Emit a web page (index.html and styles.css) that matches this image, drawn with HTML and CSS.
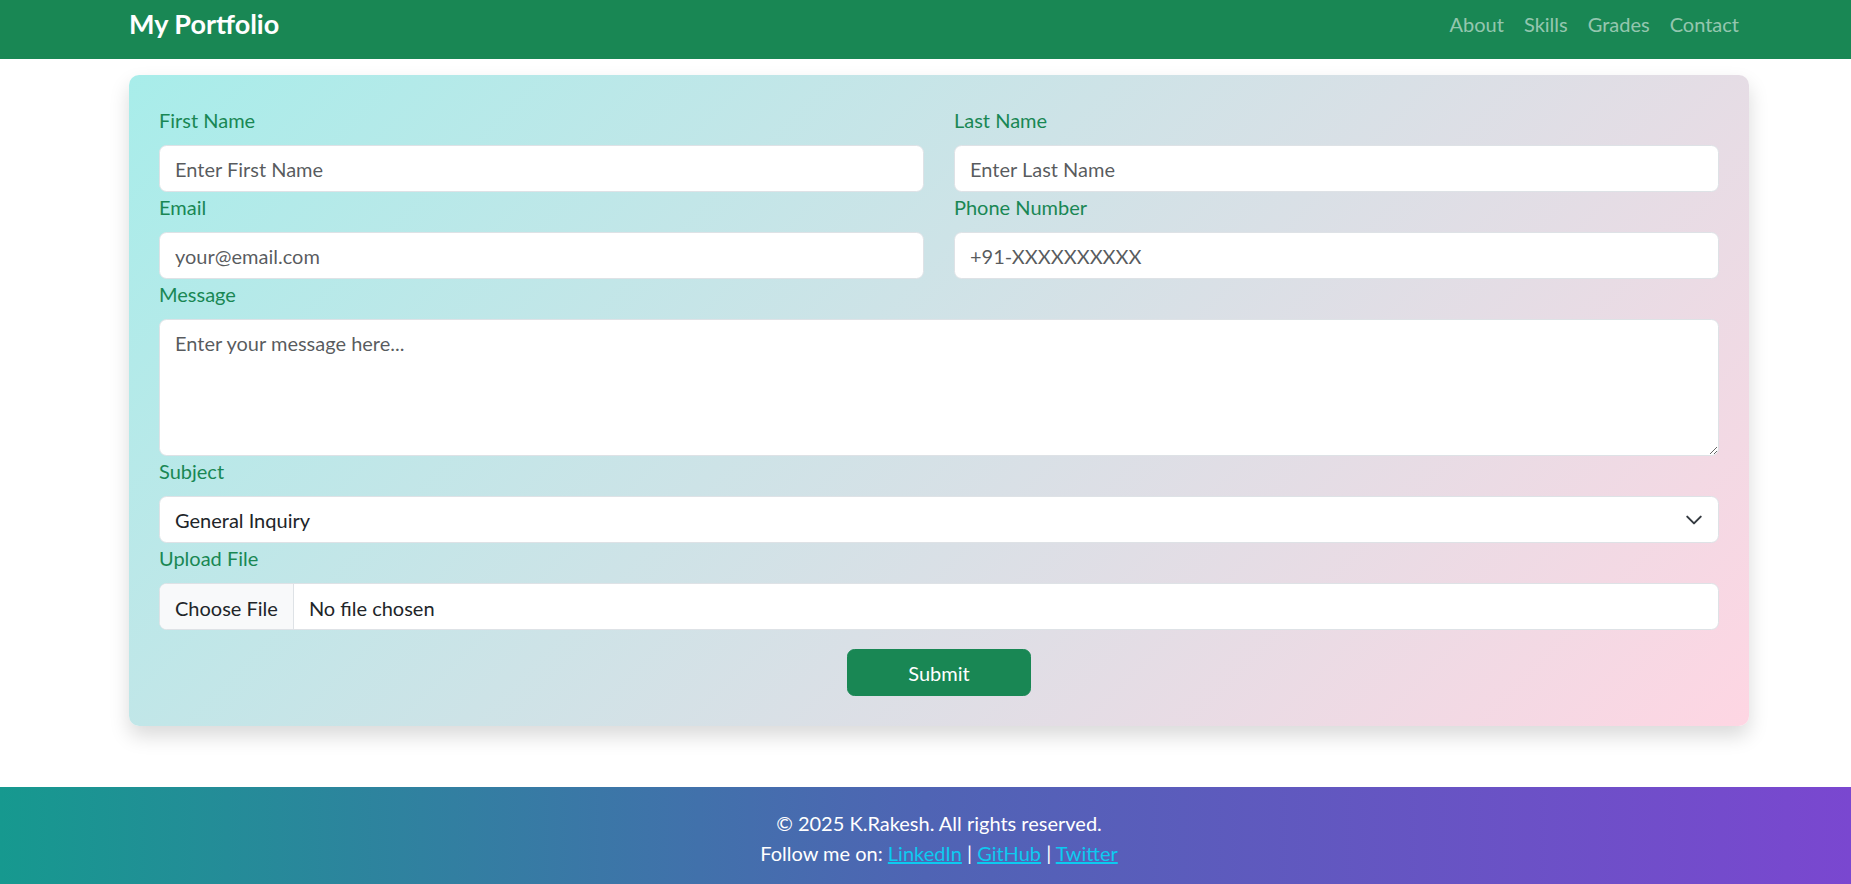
FILE: index.html
```html
<!DOCTYPE html>
<html lang="en">
<head>
<meta charset="utf-8">
<title>My Portfolio - Contact</title>
<link rel="stylesheet" href="styles.css">
</head>
<body>
<nav class="navbar">
  <div class="wrap nav-inner">
    <a class="brand" href="#">My Portfolio</a>
    <ul class="nav-links">
      <li><a href="#">About</a></li>
      <li><a href="#">Skills</a></li>
      <li><a href="#">Grades</a></li>
      <li><a href="#">Contact</a></li>
    </ul>
  </div>
</nav>

<main class="wrap page">
  <form class="contact-card">
    <div class="row-2">
      <div class="field">
        <label class="label" for="fn">First Name</label>
        <input class="control" id="fn" type="text" placeholder="Enter First Name">
      </div>
      <div class="field">
        <label class="label" for="ln">Last Name</label>
        <input class="control" id="ln" type="text" placeholder="Enter Last Name">
      </div>
    </div>
    <div class="row-2">
      <div class="field">
        <label class="label" for="em">Email</label>
        <input class="control" id="em" type="email" placeholder="your@email.com">
      </div>
      <div class="field">
        <label class="label" for="ph">Phone Number</label>
        <input class="control" id="ph" type="tel" placeholder="+91-XXXXXXXXXX">
      </div>
    </div>
    <div class="field">
      <label class="label" for="msg">Message</label>
      <textarea class="control textarea" id="msg" rows="4" placeholder="Enter your message here..."></textarea>
    </div>
    <div class="field">
      <label class="label" for="subj">Subject</label>
      <div class="select-wrap">
        <select class="control select" id="subj">
          <option>General Inquiry</option>
          <option>Project Collaboration</option>
          <option>Feedback</option>
        </select>
        <svg class="chevron" viewBox="0 0 16 16" width="18" height="18" aria-hidden="true"><path d="m2 5 6 6 6-6" fill="none" stroke="#343a40" stroke-width="1.8" stroke-linecap="round" stroke-linejoin="round"/></svg>
      </div>
    </div>
    <div class="field">
      <label class="label" for="file">Upload File</label>
      <input class="control file" id="file" type="file">
    </div>
    <div class="actions">
      <button class="btn-submit" type="submit">Submit</button>
    </div>
  </form>
</main>

<footer class="footer">
  <div class="wrap foot-inner">
    <p class="foot-line">© 2025 K.Rakesh. All rights reserved.</p>
    <p class="foot-line">Follow me on: <a href="#">LinkedIn</a> | <a href="#">GitHub</a> | <a href="#">Twitter</a></p>
  </div>
</footer>
</body>
</html>
```

FILE: styles.css
```css
* { box-sizing: border-box; }

html, body {
  margin: 0;
  padding: 0;
}

body {
  font-family: "Lato", "Noto Sans", "Liberation Sans", sans-serif;
  font-size: 20px;
  line-height: 30px;
  color: #212529;
  background: #fff;
}

.wrap {
  width: 1620px;
  margin-left: 129px;
  margin-right: 102px;
}

/* Navbar */
.navbar {
  background: #198754;
  height: 59px;
  padding-top: 6px;
}

.nav-inner {
  display: flex;
  align-items: center;
  justify-content: space-between;
  height: 36px;
}

.brand {
  color: #fff;
  font-weight: 700;
  font-size: 27px;
  line-height: 36px;
  text-decoration: none;
}

.nav-links {
  display: flex;
  list-style: none;
  margin: 0;
  padding: 0;
}

.nav-links a {
  display: block;
  padding: 0 10px;
  color: rgba(255, 255, 255, 0.55);
  text-decoration: none;
  font-size: 20px;
  line-height: 36px;
}

/* Page */
.page {
  padding-top: 16px;
  padding-bottom: 61px;
}

.contact-card {
  background: linear-gradient(135deg, #a8edea 0%, #fed6e3 100%);
  border-radius: 10px;
  box-shadow: 0 10px 20px rgba(0, 0, 0, 0.15);
  padding: 30px 30px 30px;
  margin: 0;
}

.row-2 {
  display: grid;
  grid-template-columns: 1fr 1fr;
  column-gap: 30px;
}

.field {
  display: flex;
  flex-direction: column;
}

.label {
  display: block;
  color: #198754;
  font-size: 20px;
  line-height: 30px;
  margin-bottom: 10px;
}

.control {
  display: block;
  width: 100%;
  height: 47px;
  padding: 7.5px 15px;
  font-family: inherit;
  font-size: 20px;
  line-height: 30px;
  color: #212529;
  background: #fff;
  border: 1px solid #dee2e6;
  border-radius: 7.5px;
  outline: none;
  margin: 0;
}

.control::placeholder {
  color: rgba(33, 37, 41, 0.75);
}

.textarea {
  height: 137px;
  resize: vertical;
}

.select-wrap {
  position: relative;
}

.select {
  appearance: none;
  -webkit-appearance: none;
  padding-right: 45px;
}

.chevron {
  position: absolute;
  right: 16px;
  top: 15px;
  pointer-events: none;
}

.file {
  overflow: hidden;
}

.file::file-selector-button {
  font-family: inherit;
  font-size: 20px;
  line-height: 30px;
  color: #212529;
  background: #f8f9fa;
  border: 0;
  border-right: 1px solid #dee2e6;
  border-radius: 0;
  padding: 7.5px 15px;
  margin: -7.5px 15px -7.5px -15px;
  height: 47px;
}

.actions {
  display: flex;
  justify-content: center;
  margin-top: 19px;
}

.btn-submit {
  font-family: inherit;
  font-size: 20px;
  line-height: 30px;
  color: #fff;
  background: #198754;
  border: 1px solid #198754;
  border-radius: 7.5px;
  padding: 7.5px 60px;
  height: 47px;
  cursor: pointer;
}

/* Footer */
.footer {
  background: linear-gradient(90deg, #16998f 0%, #4f64b4 50%, #7a47d0 100%);
  color: #fff;
  padding: 21px 0 16px;
}

.foot-inner {
  text-align: center;
}

.foot-line {
  margin: 0;
  font-size: 20px;
  line-height: 30px;
}

.footer a {
  color: #0dcaf0;
  text-decoration: underline;
}
```
